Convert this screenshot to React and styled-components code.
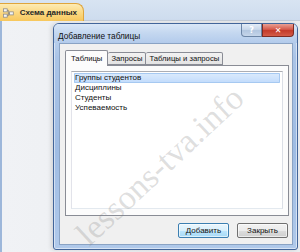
import React from "react";
import styled, { createGlobalStyle } from "styled-components";

const Global = createGlobalStyle`
  html, body { margin: 0; padding: 0; }
  body { font-family: "Liberation Sans", Arial, sans-serif; background: #eceef1; }
`;

const Screen = styled.div`
  position: relative;
  width: 300px;
  height: 252px;
  overflow: hidden;
  display: flex;
  flex-direction: column;
  background: #eceef1;
`;

const TopBar = styled.div`
  height: 20px;
  flex: none;
  display: flex;
  align-items: flex-end;
  background: linear-gradient(#d8e4f2, #cedcee);
  border-bottom: 1px solid #c3ccd8;
`;

const DocTab = styled.div`
  height: 17px;
  width: 74px;
  margin-bottom: -1px;
  padding: 0 6px 0 3px;
  display: flex;
  align-items: center;
  gap: 6px;
  background: linear-gradient(#fdebb4, #fbd77f 55%, #f7c75c);
  border: 1px solid #dfa53c;
  border-bottom: none;
  border-left: none;
  border-radius: 0 8px 0 0;
  font-size: 8px;
  font-weight: bold;
  color: #262626;
  white-space: nowrap;
`;

const Workspace = styled.div`
  flex: 1;
  display: flex;
  padding: 2px 2px 2px 51px;
  border-left: 2px solid #9db7da;
  background: linear-gradient(90deg, #f0f2f5, #eaecef 80%);
`;

const Dialog = styled.div`
  width: 245px;
  height: 227px;
  display: flex;
  flex-direction: column;
  box-sizing: border-box;
  padding: 0 4px 4px 5px;
  border: 1px solid #42659a;
  border-radius: 6px 6px 3px 3px;
  background: linear-gradient(#c4d8f1, #aac4e7 15%, #9fbce3 55%, #b0c9ea);
  box-shadow: -2px 0 4px rgba(0, 0, 0, 0.12), inset 0 0 0 1px rgba(255, 255, 255, 0.5);
`;

const TitleBar = styled.div`
  height: 19px;
  flex: none;
  display: flex;
  align-items: flex-start;
  justify-content: space-between;
  background: linear-gradient(#dae7f7, #c5d8f0 45%, #b3cbeb);
  margin: 0 -4px 0 -5px;
  padding: 0 3px 0 4px;
  border-radius: 5px 5px 0 0;
`;

const Title = styled.span`
  font-size: 8.3px;
  color: #101010;
  line-height: 12px;
  margin-top: 6px;
`;

const Controls = styled.div`
  display: flex;
  height: 13px;
`;

const CtlButton = styled.div`
  width: ${(p) => p.$w}px;
  height: 13px;
  display: flex;
  align-items: center;
  justify-content: center;
  box-sizing: border-box;
  border: 1px solid ${(p) => (p.$close ? "#7d2b23" : "#6c85a6")};
  border-top: none;
  border-radius: ${(p) => (p.$close ? "0 0 4px 0" : "0 0 0 4px")};
  background: ${(p) =>
    p.$close
      ? "linear-gradient(#e8a094, #d5594a 45%, #c33a2a 55%, #d45c48)"
      : "linear-gradient(#e3ecf7, #c8d7ea 45%, #b2c6e0 55%, #c6d6ea)"};
  color: #fff;
  font-size: 8px;
  font-weight: bold;
  font-family: "DejaVu Sans", sans-serif;
`;

const Client = styled.div`
  flex: 1;
  display: flex;
  flex-direction: column;
  padding: 6px 3px 6px 5px;
  background: #f0f0f0;
  border: 1px solid #8aa3c4;
`;

const TabStrip = styled.div`
  display: flex;
  align-items: flex-end;
  height: 15px;
  flex: none;
  position: relative;
  z-index: 1;
`;

const Tab = styled.div`
  height: ${(p) => (p.$active ? 16 : 13)}px;
  box-sizing: border-box;
  padding: 0 ${(p) => (p.$active ? 5 : 3)}px;
  margin-bottom: ${(p) => (p.$active ? -1 : 0)}px;
  display: flex;
  align-items: center;
  border: 1px solid #898c95;
  border-bottom: ${(p) => (p.$active ? "none" : "1px solid #898c95")};
  border-left: ${(p) => (p.$first || p.$active ? "1px solid #898c95" : "none")};
  border-radius: 2px 2px 0 0;
  background: ${(p) => (p.$active ? "#fcfcfc" : "linear-gradient(#f2f2f2, #e3e3e3)")};
  font-size: 7.7px;
  color: #111;
  white-space: nowrap;
`;

const TabPanel = styled.div`
  flex: 1;
  display: flex;
  padding: 5px 5px 6px 5px;
  background: #fcfcfc;
  border: 1px solid #898c95;
`;

const ListBox = styled.div`
  flex: 1;
  display: flex;
  flex-direction: column;
  padding: 1px 2px;
  background: #fff;
  border: 1px solid #abadb3;
  border-color: #abadb3 #dbdfe6 #e3e9ef #e2e3ea;
`;

const Item = styled.div`
  height: 10px;
  line-height: 10px;
  padding-left: 1px;
  font-size: 8px;
  color: #111;
  border-radius: 1px;
  background: ${(p) => (p.$selected ? "linear-gradient(#dcebfc, #c1dbfc)" : "transparent")};
  box-shadow: ${(p) => (p.$selected ? "inset 0 0 0 1px #a6c9f1" : "none")};
`;

const ButtonRow = styled.div`
  display: flex;
  justify-content: flex-end;
  gap: 8px;
  margin-top: 7px;
  padding-right: 1px;
  flex: none;
`;

const Button = styled.div`
  width: ${(p) => p.$w}px;
  height: 15px;
  box-sizing: border-box;
  display: flex;
  align-items: center;
  justify-content: center;
  border: 1px solid ${(p) => (p.$default ? "#3c7fb1" : "#707070")};
  border-radius: 2px;
  background: ${(p) =>
    p.$default
      ? "linear-gradient(#eaf6fd, #d9f0fc 50%, #bee6fd 50%, #a7d9f5)"
      : "linear-gradient(#f2f2f2, #ebebeb 50%, #dddddd 50%, #cfcfcf)"};
  box-shadow: inset 0 0 0 1px rgba(255, 255, 255, 0.6);
  font-size: 8px;
  color: #111;
`;

const Watermark = styled.div`
  position: absolute;
  left: 160px;
  top: 166px;
  transform: translate(-50%, -50%) rotate(-43deg);
  font-family: "Liberation Serif", "Times New Roman", serif;
  font-size: 34px;
  color: rgba(130, 130, 130, 0.26);
  white-space: nowrap;
  pointer-events: none;
`;

const RelIcon = () => (
  <svg width="14" height="12" viewBox="0 0 14 12">
    <rect x="0.5" y="0.5" width="5" height="4" fill="#f4f4f4" stroke="#8a8a8a" />
    <rect x="8.5" y="4.5" width="5" height="4" fill="#f4f4f4" stroke="#8a8a8a" />
    <rect x="0.5" y="7.5" width="5" height="4" fill="#f4f4f4" stroke="#8a8a8a" />
    <path d="M5.5 2.5 H7 V6.5 H8.5 M5.5 9.5 H7 V6.5" fill="none" stroke="#7a7a7a" />
  </svg>
);

export default function App() {
  return (
    <>
      <Global />
      <Screen>
        <TopBar>
          <DocTab>
            <RelIcon />
            <span>Схема данных</span>
          </DocTab>
        </TopBar>
        <Workspace>
          <Dialog>
            <TitleBar>
              <Title>Добавление таблицы</Title>
              <Controls>
                <CtlButton $w={21}>?</CtlButton>
                <CtlButton $w={32} $close>✕</CtlButton>
              </Controls>
            </TitleBar>
            <Client>
              <TabStrip>
                <Tab $active $first>Таблицы</Tab>
                <Tab>Запросы</Tab>
                <Tab>Таблицы и запросы</Tab>
              </TabStrip>
              <TabPanel>
                <ListBox>
                  <Item $selected>Группы студентов</Item>
                  <Item>Дисциплины</Item>
                  <Item>Студенты</Item>
                  <Item>Успеваемость</Item>
                </ListBox>
              </TabPanel>
              <ButtonRow>
                <Button $w={51} $default>Добавить</Button>
                <Button $w={51}>Закрыть</Button>
              </ButtonRow>
            </Client>
          </Dialog>
        </Workspace>
        <Watermark>lessons-tva.info</Watermark>
      </Screen>
    </>
  );
}
